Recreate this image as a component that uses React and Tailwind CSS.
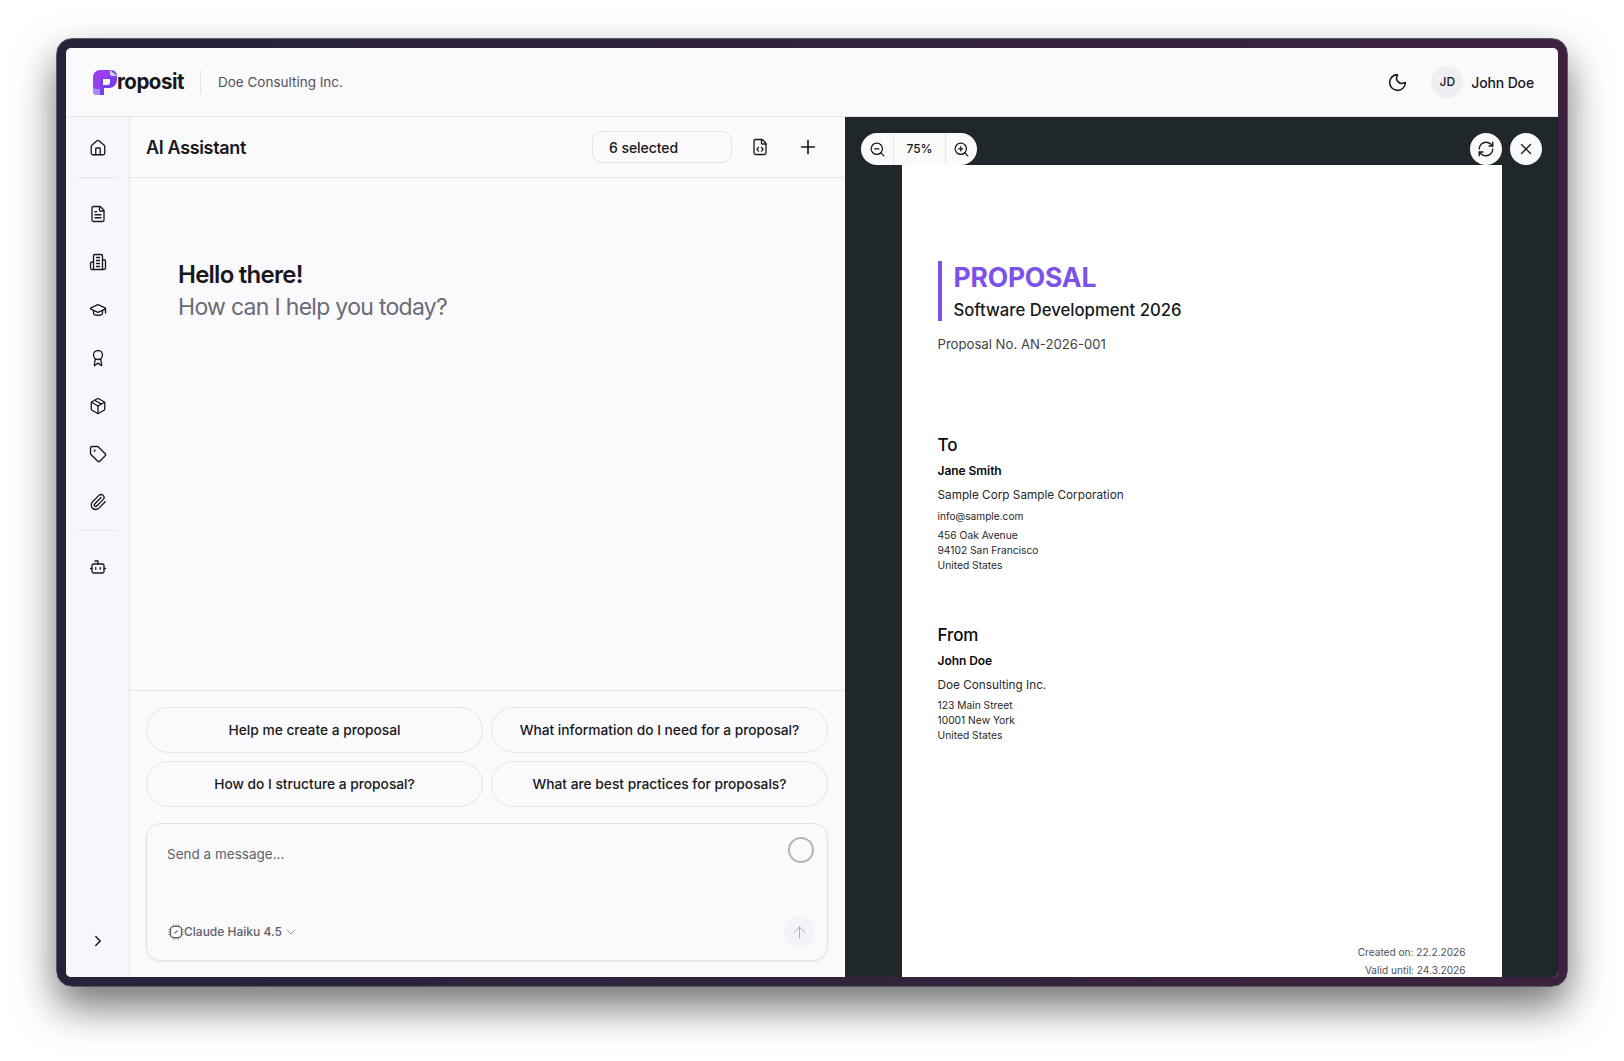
import { Bot, ChevronDown, ChevronRight, FileCode, FileText, GraduationCap, House, Award, Moon, Package, Paperclip, Plus, RefreshCw, Tag, X, ZoomIn, ZoomOut, ArrowUp } from "lucide-react";

// lucide's older building shape, the installed one has a different outline
const Building = (props) => (
  <svg width="18" height="18" viewBox="0 0 24 24" fill="none" stroke="currentColor" strokeWidth="1.75" strokeLinecap="round" strokeLinejoin="round" {...props}>
    <path d="M6 22V4a2 2 0 0 1 2-2h8a2 2 0 0 1 2 2v18Z" />
    <path d="M6 12H4a2 2 0 0 0-2 2v6a2 2 0 0 0 2 2h2" />
    <path d="M18 9h2a2 2 0 0 1 2 2v9a2 2 0 0 1-2 2h-2" />
    <path d="M10 6h4M10 10h4M10 14h4M10 18h4" />
  </svg>
);

const ModelIcon = () => (
  <svg width="16" height="16" viewBox="0 0 16 16" fill="none" stroke="currentColor" strokeWidth="1.2" strokeLinecap="round" className="shrink-0">
    <rect x="2.5" y="2.5" width="11" height="11" rx="3.5" />
    <path d="M6.8 9.2 9.2 6.8" />
    <path d="M5.5 1v1.2M8 1v1.2M10.5 1v1.2M5.5 13.8V15M8 13.8V15M10.5 13.8V15M1 5.5h1.2M1 8h1.2M1 10.5h1.2M13.8 5.5H15M13.8 8H15M13.8 10.5H15" />
  </svg>
);

const navTop = [FileText, Building, GraduationCap, Award, Package, Tag, Paperclip];

const prompts = [
  "Help me create a proposal",
  "What information do I need for a proposal?",
  "How do I structure a proposal?",
  "What are best practices for proposals?",
];

const Logo = () => (
  <svg width="24" height="26" viewBox="0 0 24 26" className="shrink-0">
    <path d="M0 8a7 7 0 0 1 7-7h10v12H10v13H4a4 4 0 0 1-4-4z" fill="#9a3ff0" />
    <path d="M4 26a4 4 0 0 1-4-4v-6a4 4 0 0 0 4 4h3v6z" fill="#a78bfa" />
    <path d="M7 26V13a4 4 0 0 1 4-4h4l3-8a6 6 0 0 1 6 6v4a8 8 0 0 1-8 8H11v7z" fill="#7a3df0" />
    <path d="M17 1l7 6h-5a2 2 0 0 1-2-2z" fill="#cfcfd6" />
    <path d="M10 10h7v3a3 3 0 0 1-3 3h-4z" fill="#fafafd" />
  </svg>
);

const Sidebar = () => (
  <aside className="w-[64px] shrink-0 border-r border-[#e4e4e9] bg-[#f6f6fb] flex flex-col items-center">
    <div className="h-[61px] w-[39px] flex items-center justify-center border-b border-[#e4e4e9]">
      <House size={18} strokeWidth={1.75} className="text-[#18181b] mt-[1px]" />
    </div>
    <div className="flex flex-col items-center gap-[30px] w-[39px] pt-[27px] pb-[19px] border-b border-[#e4e4e9]">
      {navTop.map((Icon, i) => (
        <Icon key={i} size={18} strokeWidth={1.75} className="text-[#18181b]" />
      ))}
    </div>
    <div className="pt-[27px]">
      <Bot size={18} strokeWidth={1.75} className="text-[#18181b]" />
    </div>
    <div className="mt-auto pb-[27px]">
      <ChevronRight size={18} strokeWidth={2} className="text-[#18181b]" />
    </div>
  </aside>
);

const ChatPane = () => (
  <section className="w-[715px] shrink-0 flex flex-col bg-[#fafafd]">
    <div className="h-[61px] shrink-0 border-b border-[#e4e4e9] flex items-center pl-[16px] pr-[26px]">
      <h2 className="text-[18px] font-semibold tracking-[-0.35px] text-[#18181b]">AI Assistant</h2>
      <div className="ml-auto w-[140px] h-[32px] rounded-[10px] border border-[#e4e4e9] flex items-center pl-[16px] text-[14px] font-medium tracking-[-0.05px] text-[#18181b]">
        6 selected
      </div>
      <FileCode size={18} strokeWidth={1.75} className="ml-[19px] text-[#18181b]" />
      <Plus size={22} strokeWidth={1.75} className="ml-[28px] text-[#18181b]" />
    </div>

    <div className="flex-1 pl-[48px] pt-[81px]">
      <p className="text-[24px] leading-[32px] font-semibold tracking-[-0.75px] text-[#18181b]">Hello there!</p>
      <p className="text-[23px] leading-[32px] tracking-[-0.7px] text-[#6b6b76]">How can I help you today?</p>
    </div>

    <div className="shrink-0 border-t border-[#e4e4e9] pl-[16px] pr-[17px] pt-[16px] pb-[16px]">
      <div className="grid grid-cols-2 gap-[8px]">
        {prompts.map((text) => (
          <button key={text} className="h-[46px] rounded-[23px] border border-[#e4e4e9] text-[13.75px] font-medium text-[#18181b]">
            {text}
          </button>
        ))}
      </div>
      <div className="relative mt-[16px] h-[138px] rounded-[14px] border border-[#e0e0e6] shadow-[0_1px_2px_rgba(0,0,0,0.06)] px-[20px] pt-[20px]">
        <p className="text-[13.5px] text-[#5f5f68]">Send a message...</p>
        <div className="absolute right-[13px] top-[13px] w-[26px] h-[26px] rounded-full border-2 border-[#b4b4ba]" />
        <div className="absolute left-[21px] bottom-[19px] flex items-center text-[12px] font-medium text-[#5f5f68]">
          <ModelIcon />
          <span>Claude Haiku 4.5</span>
          <ChevronDown size={16} strokeWidth={1.25} className="ml-[1px] text-[#8a8a92]" />
        </div>
        <div className="absolute right-[12px] bottom-[12px] w-[32px] h-[32px] rounded-full bg-[#f3f3f8] flex items-center justify-center">
          <ArrowUp size={19} strokeWidth={1.25} className="text-[#a8a8b0]" />
        </div>
      </div>
    </div>
  </section>
);

const Party = ({ title, name, company, email, lines, gap, addressGap }) => (
  <div className={gap}>
    <h3 className="text-[17px] leading-[24px] font-medium tracking-[-0.1px] text-[#09090b]">{title}</h3>
    <p className="mt-[6px] text-[12px] leading-[16px] font-semibold tracking-[-0.05px] text-[#09090b]">{name}</p>
    <p className="mt-[8px] text-[11.75px] leading-[16px] text-[#27272a]">{company}</p>
    {email && <p className="mt-[5px] text-[10.15px] leading-[16px] text-[#27272a]">{email}</p>}
    <div className={`${addressGap} text-[10.25px] leading-[15px] text-[#27272a]`}>
      {lines.map((line) => (
        <p key={line}>{line}</p>
      ))}
    </div>
  </div>
);

const PreviewPane = () => (
  <section className="relative flex-1 bg-[#1f272b] flex flex-col items-center overflow-hidden pt-[48px]">
    <div className="absolute left-[16px] top-[16px] h-[32px] rounded-full bg-[#fafafd] flex items-center text-[#18181b]">
      <div className="w-[33px] h-full flex items-center justify-center border-r border-[#e4e4e9]">
        <ZoomOut size={17} strokeWidth={1.75} />
      </div>
      <div className="w-[51px] text-center text-[12px] font-medium">75%</div>
      <div className="w-[32px] h-full flex items-center justify-center border-l border-[#e4e4e9]">
        <ZoomIn size={17} strokeWidth={1.75} />
      </div>
    </div>
    <div className="absolute right-[16px] top-[16px] flex gap-[8px]">
      <div className="w-[32px] h-[32px] rounded-full bg-[#fafafd] flex items-center justify-center text-[#18181b]">
        <RefreshCw size={18} strokeWidth={1.75} />
      </div>
      <div className="w-[32px] h-[32px] rounded-full bg-[#fafafd] flex items-center justify-center text-[#18181b]">
        <X size={18} strokeWidth={1.75} />
      </div>
    </div>

    <div className="w-[600px] flex-1 bg-white px-[36px] pt-[96px] flex flex-col">
      <div className="border-l-[4px] border-[#7c52e8] pl-[12px] h-[60px] pt-[1px]">
        <p className="text-[26.5px] leading-[30px] font-bold text-[#7c52e8] tracking-[-0.2px]">PROPOSAL</p>
        <p className="mt-[6px] text-[16.7px] leading-[24px] font-medium text-[#18181b]">Software Development 2026</p>
      </div>
      <p className="mt-[13px] text-[13.15px] leading-[20px] text-[#3f3f46]">Proposal No. AN-2026-001</p>
      <Party
        title="To"
        name="Jane Smith"
        company="Sample Corp Sample Corporation"
        email="info@sample.com"
        lines={["456 Oak Avenue", "94102 San Francisco", "United States"]}
        gap="mt-[79px]"
        addressGap="mt-[4px]"
      />
      <Party
        title="From"
        name="John Doe"
        company="Doe Consulting Inc."
        lines={["123 Main Street", "10001 New York", "United States"]}
        gap="mt-[50px]"
        addressGap="mt-[5px]"
      />
      <div className="mt-auto -mb-[2px] text-right text-[10.1px] leading-[18px] text-[#52525b]">
        <p>Created on: 22.2.2026</p>
        <p>Valid until: 24.3.2026</p>
      </div>
    </div>
  </section>
);

export default function App() {
  return (
    <div className="w-[1624px] h-[1061px] bg-white pl-[56px] pt-[38px] font-['Inter',sans-serif] overflow-hidden">
      <div className="w-[1512px] h-[949px] rounded-[16px] bg-gradient-to-r from-[#25233a] to-[#3d2240] p-[9px] shadow-[0_20px_40px_rgba(0,0,0,0.55)] border border-[#5c5a64]">
        <div className="h-full rounded-[5px] overflow-hidden bg-[#fafafd] flex flex-col">
          <header className="h-[69px] shrink-0 border-b border-[#e4e4e9] flex items-center pl-[27px] pr-[24px]">
            <Logo />
            <span className="text-[20.5px] font-bold tracking-[-0.5px] text-[#18181b]">roposit</span>
            <div className="ml-[16px] w-px h-[24px] bg-[#e4e4e9]" />
            <span className="ml-[17px] text-[13.5px] text-[#52525b]">Doe Consulting Inc.</span>
            <Moon size={21} strokeWidth={1.75} className="ml-auto mr-[1px] text-[#18181b]" />
            <div className="ml-[22px] w-[32px] h-[32px] rounded-full bg-[#efeff3] flex items-center justify-center text-[12px] font-medium text-[#18181b]">
              JD
            </div>
            <span className="ml-[8px] text-[14px] font-medium tracking-[-0.15px] text-[#18181b]">John Doe</span>
          </header>
          <div className="flex-1 flex min-h-0">
            <Sidebar />
            <ChatPane />
            <PreviewPane />
          </div>
        </div>
      </div>
    </div>
  );
}
